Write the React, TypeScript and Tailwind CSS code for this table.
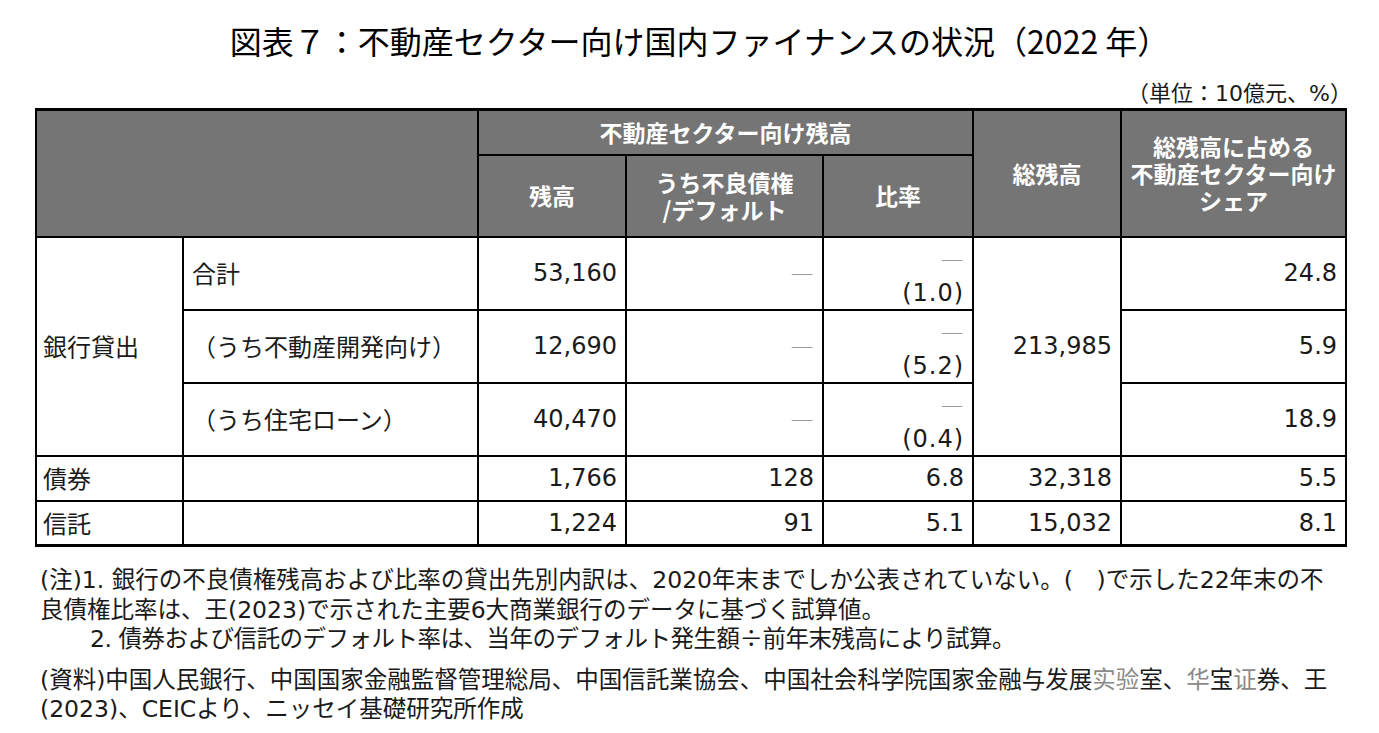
import React from 'react';

const font = { fontFamily: "'Noto Sans CJK JP', 'Noto Sans', sans-serif" };
const latin = { fontFamily: "'DejaVu Sans', 'Noto Sans CJK JP', sans-serif" };

const Dash = () => (
  <span className="text-[#9a9a9a]" style={font}>
    ―
  </span>
);

const Ratio: React.FC<{ value: string }> = ({ value }) => (
  <td className="border-2 border-black align-top pr-[8px] pt-[6px] text-right">
    <div className="leading-[30px]">
      <Dash />
    </div>
    <div className="leading-[30px] mt-[4px] tracking-[1px]" style={latin}>
      {value}
    </div>
  </td>
);

const cell = 'border-2 border-black';
const num = 'border-2 border-black text-right pr-[8px] align-middle text-[24px]';
const head =
  'border-2 border-black bg-[#757575] text-white font-bold text-center align-middle leading-[27px] text-[23px]';

const N: React.FC<{ v: string; last?: boolean }> = ({ v, last }) => (
  <td className={`${num} ${last ? 'border-b-[3px]' : ''}`} style={latin}>
    {v}
  </td>
);

export default function App() {
  return (
    <div className="w-[1379px] h-[733px] bg-white text-[#1a1a1a]" style={font}>
      <h1 className="pt-[20px] pl-[20px] text-center text-[32px] leading-[40px] font-normal text-black">
        図表７：不動産セクター向け国内ファイナンスの状況（2022 年）
      </h1>

      <div className="ml-[35px] w-[1310px]">
        <div className="mt-[17px] mr-[-7px] text-right text-[22px] leading-[28px]">
          （単位：<span style={latin}>10</span>億元、<span style={latin}>%</span>）
        </div>

        <table className="table-fixed border-collapse w-[1310px] text-[24px]">
          <colgroup>
            <col className="w-[147px]" />
            <col className="w-[295px]" />
            <col className="w-[148px]" />
            <col className="w-[197px]" />
            <col className="w-[150px]" />
            <col className="w-[148px]" />
            <col className="w-[225px]" />
          </colgroup>
          <thead>
            <tr className="h-[45px]">
              <th colSpan={2} rowSpan={2} className={`${head} border-t-[3px]`} />
              <th colSpan={3} className={`${head} border-t-[3px]`}>不動産セクター向け残高</th>
              <th rowSpan={2} className={`${head} border-t-[3px]`}>総残高</th>
              <th rowSpan={2} className={`${head} border-t-[3px]`}>
                総残高に占める
                <br />
                不動産セクター向け
                <br />
                シェア
              </th>
            </tr>
            <tr className="h-[82px]">
              <th className={head}>残高</th>
              <th className={head}>
                うち不良債権
                <br />
                /デフォルト
              </th>
              <th className={head}>比率</th>
            </tr>
          </thead>
          <tbody>
            <tr className="h-[73px]">
              <td rowSpan={3} className={`${cell} pl-[6px]`}>銀行貸出</td>
              <td className={`${cell} pl-[8px]`}>合計</td>
              <N v="53,160" />
              <td className={`${num} pr-[4px]`}><Dash /></td>
              <Ratio value="(1.0)" />
              <td rowSpan={3} className={num} style={latin}>213,985</td>
              <N v="24.8" />
            </tr>
            <tr className="h-[73px]">
              <td className={`${cell} pl-[8px]`}>（うち不動産開発向け）</td>
              <N v="12,690" />
              <td className={`${num} pr-[4px]`}><Dash /></td>
              <Ratio value="(5.2)" />
              <N v="5.9" />
            </tr>
            <tr className="h-[73px]">
              <td className={`${cell} pl-[8px]`}>（うち住宅ローン）</td>
              <N v="40,470" />
              <td className={`${num} pr-[4px]`}><Dash /></td>
              <Ratio value="(0.4)" />
              <N v="18.9" />
            </tr>
            <tr className="h-[45px]">
              <td className={`${cell} pl-[6px]`}>債券</td>
              <td className={cell} />
              <N v="1,766" />
              <N v="128" />
              <N v="6.8" />
              <N v="32,318" />
              <N v="5.5" />
            </tr>
            <tr className="h-[45px]">
              <td className={`${cell} border-b-[3px] pl-[6px]`}>信託</td>
              <td className={`${cell} border-b-[3px]`} />
              <N v="1,224" last />
              <N v="91" last />
              <N v="5.1" last />
              <N v="15,032" last />
              <N v="8.1" last />
            </tr>
          </tbody>
        </table>

        <div className="mt-[18px] pl-[5px] text-[23.5px] leading-[27.5px] whitespace-nowrap">
          <div>
            <span style={latin}>(</span>注<span style={latin}>)1. </span>
            銀行の不良債権残高および比率の貸出先別内訳は、<span style={latin}>2020</span>
            年末までしか公表されていない。<span style={latin}>(</span>　<span style={latin}>)</span>で示した
            <span style={latin}>22</span>年末の不
          </div>
          <div>
            良債権比率は、王<span style={latin}>(2023)</span>で示された主要<span style={latin}>6</span>
            大商業銀行のデータに基づく試算値。
          </div>
          <div className="pl-[50px] tracking-[-0.5px]">
            <span style={latin}>2. </span>債券および信託のデフォルト率は、当年のデフォルト発生額÷前年末残高により試算。
          </div>
          <div className="mt-[11px]">
            <span style={latin}>(</span>資料<span style={latin}>)</span>
            中国人民銀行、中国国家金融監督管理総局、中国信託業協会、中国社会科学院国家金融与发展
            <span className="text-[#8a8a8a]">实验</span>室、<span className="text-[#8a8a8a]">华</span>宝
            <span className="text-[#8a8a8a]">证</span>券、王
          </div>
          <div>
            <span style={latin}>(2023)</span>、<span style={latin}>CEIC</span>より、ニッセイ基礎研究所作成
          </div>
        </div>
      </div>
    </div>
  );
}
